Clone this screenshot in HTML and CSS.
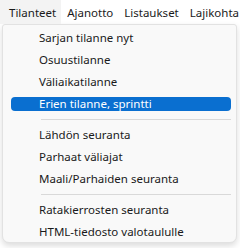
FILE: index.html
```html
<!DOCTYPE html>
<html lang="fi">
<head>
  <meta charset="UTF-8">
  <title>Tilanteet</title>
  <link rel="stylesheet" href="styles.css">
</head>
<body>
  <nav class="menubar">
    <div class="menubar-item open">Tilanteet</div>
    <div class="menubar-item">Ajanotto</div>
    <div class="menubar-item">Listaukset</div>
    <div class="menubar-item">Lajikohta</div>
  </nav>
  <!-- Tilanteet dropdown -->
  <div class="dropdown">
    <div class="menu-item">Sarjan tilanne nyt</div>
    <div class="menu-item">Osuustilanne</div>
    <div class="menu-item">Väliaikatilanne</div>
    <div class="menu-item active">Erien tilanne, sprintti</div>
    <div class="separator"></div>
    <div class="menu-item">Lähdön seuranta</div>
    <div class="menu-item">Parhaat väliajat</div>
    <div class="menu-item">Maali/Parhaiden seuranta</div>
    <div class="separator"></div>
    <div class="menu-item">Ratakierrosten seuranta</div>
    <div class="menu-item">HTML-tiedosto valotaululle</div>
  </div>
</body>
</html>
```

FILE: styles.css
```css
body {
  margin: 0;
  background: #fff;
  font-family: 'Noto Sans', 'Open Sans', sans-serif;
  font-size: 11.5px;
  color: #1a1a1a;
  width: 240px;
  height: 248px;
  overflow: hidden;
}
.menubar {
  display: flex;
  height: 24px;
  white-space: nowrap;
  overflow: hidden;
}
.menubar-item {
  padding: 0 5px 0 6px;
  line-height: 24px;
  padding-top: 1px;
  height: 23px;
}
.menubar-item:first-child {
  padding-left: 9px;
}
.menubar-item.open {
  background: #f3f3f3;
}
.dropdown {
  margin-left: 2px;
  width: 233px;
  background: #f9f9f9;
  border: 1px solid #e2e2e2;
  border-radius: 3px 3px 7px 7px;
  box-shadow: 0 3px 6px rgba(0, 0, 0, 0.14);
  padding: 6px 0 3px;
  display: flex;
  flex-direction: column;
  gap: 8px;
}
.menu-item {
  height: 14px;
  line-height: 14px;
  margin: 0 5px 0 8px;
  padding-left: 28px;
  border-radius: 4px;
  white-space: nowrap;
}
.menu-item.active {
  background: #0a6fd0;
  color: #fff;
}
.separator {
  height: 1px;
  background: #d9d9d9;
  margin: 0 5px 0 38px;
}
```
